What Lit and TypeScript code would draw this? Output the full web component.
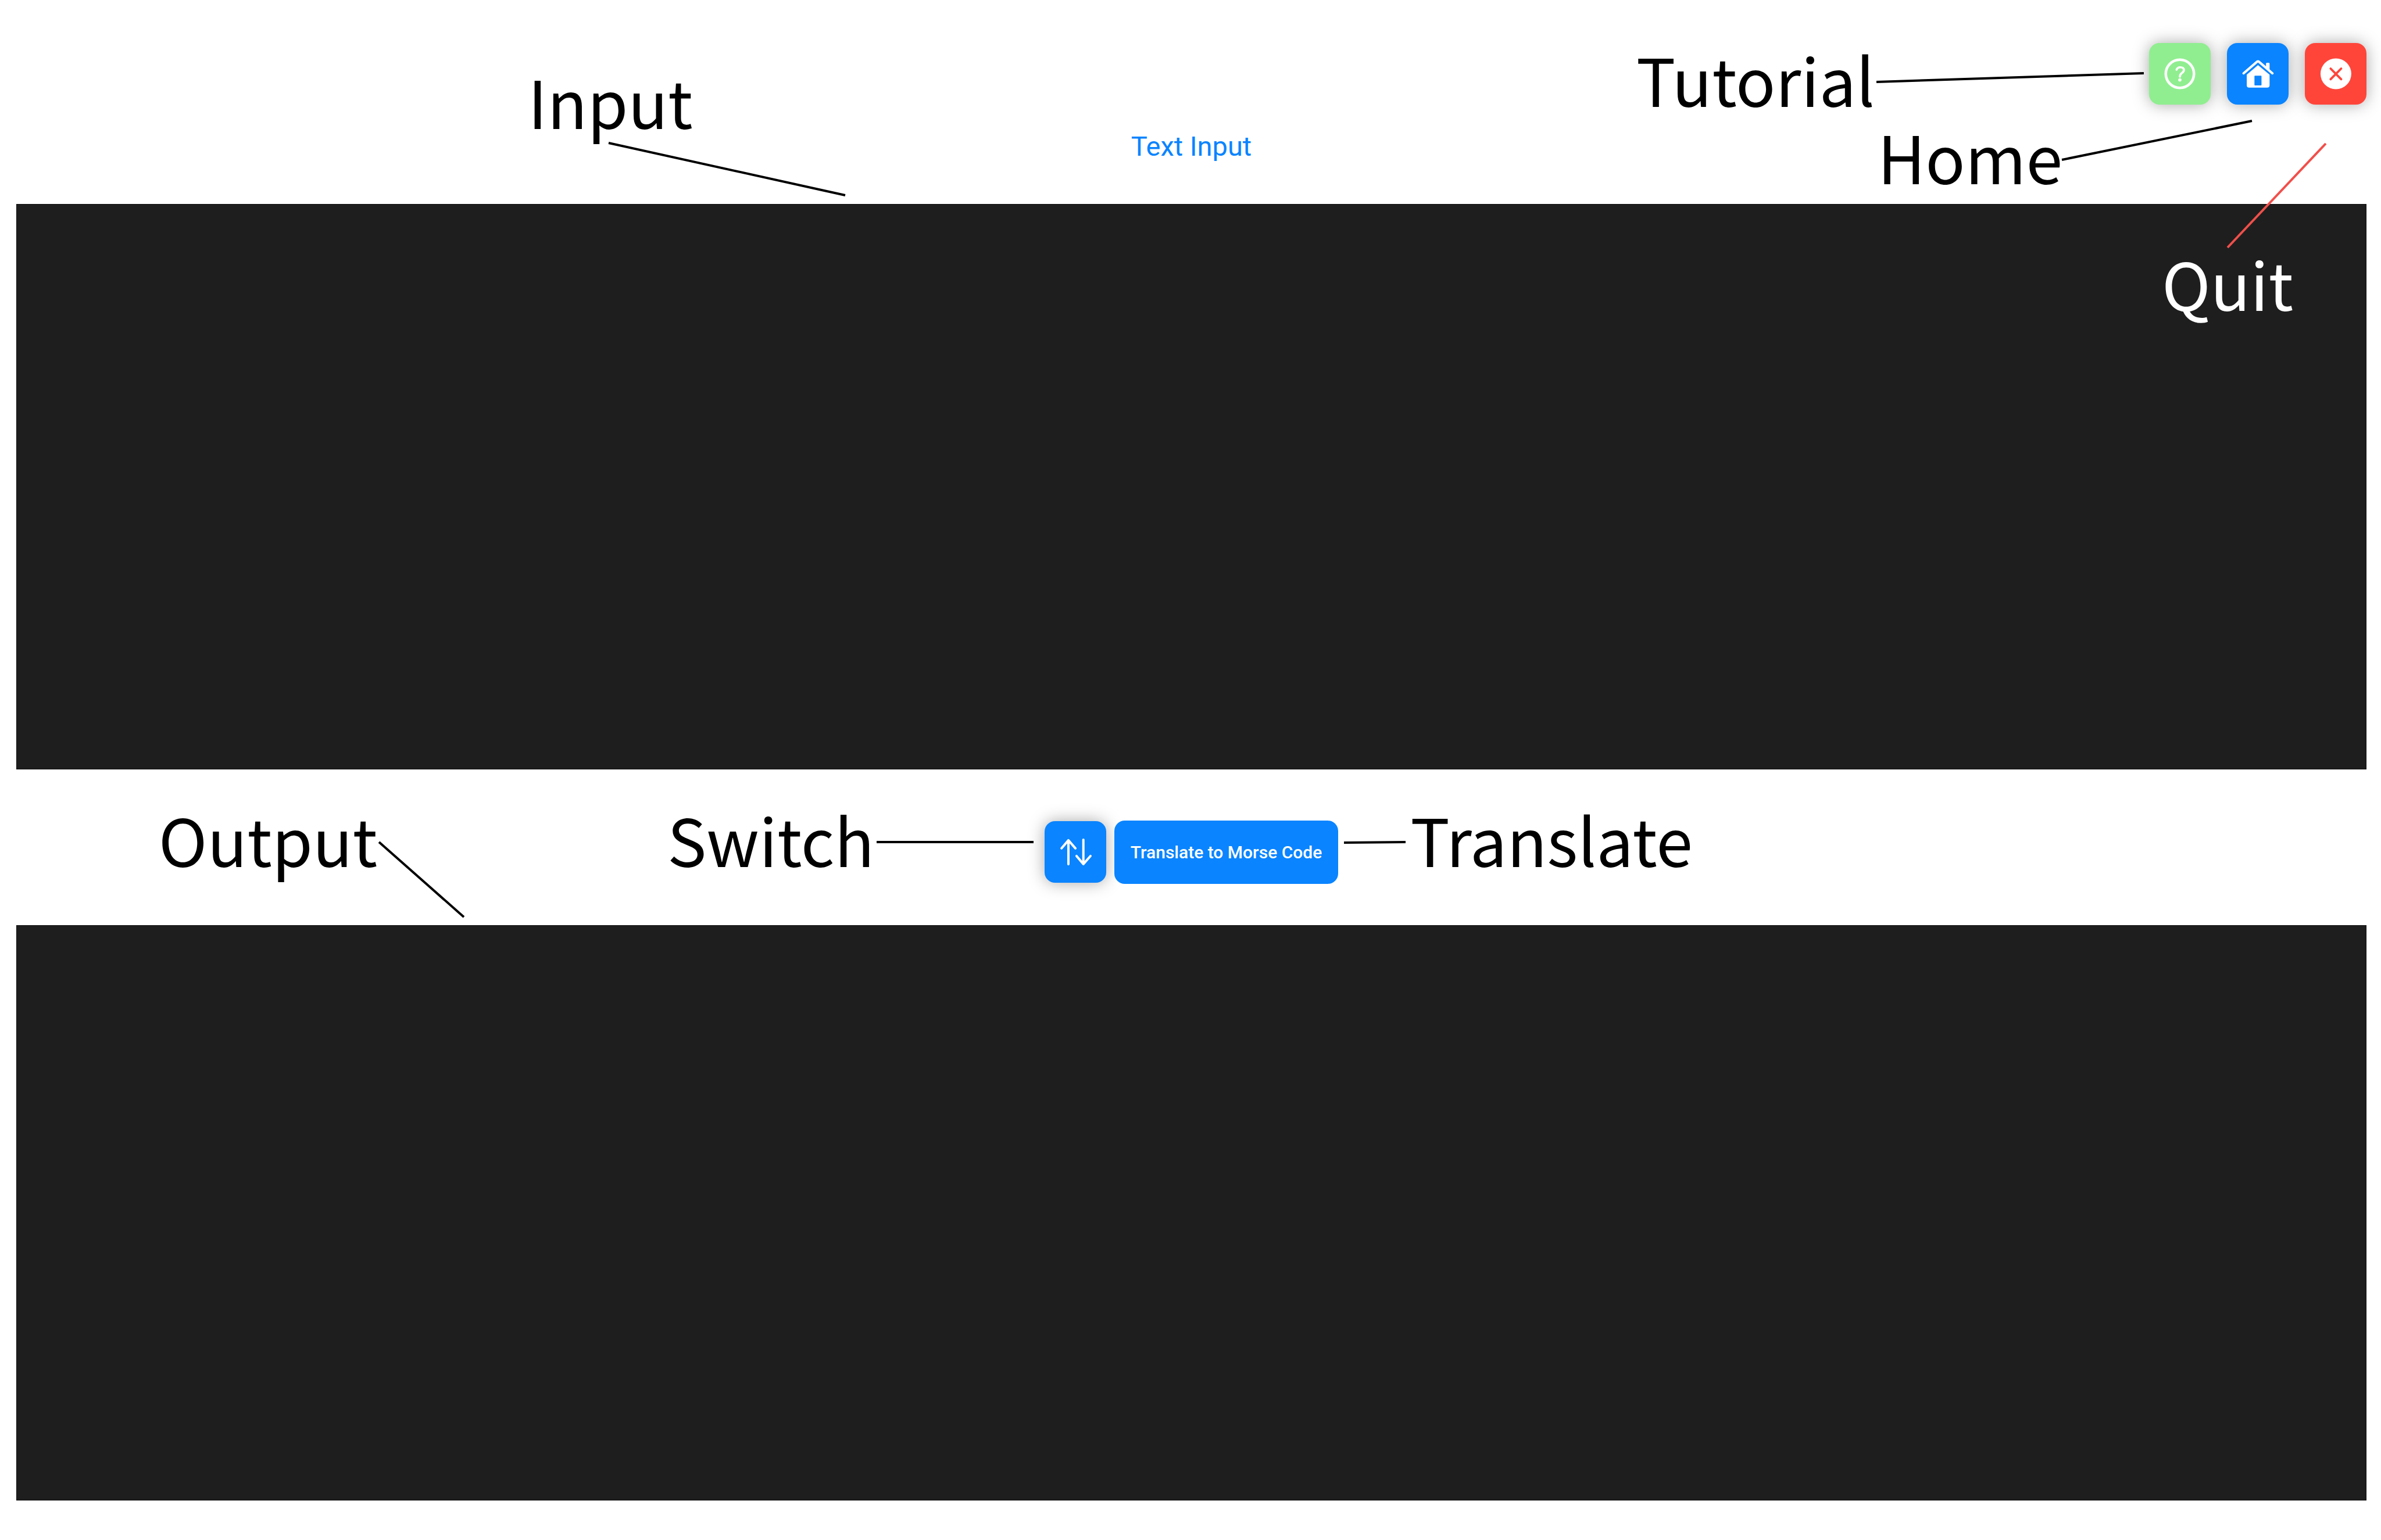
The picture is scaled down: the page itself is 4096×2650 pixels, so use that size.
import { LitElement, html, svg, css } from "lit";
import { customElement } from "lit/decorators.js";

interface Callout {
  text: string;
  x: number;
  baseline: number;
  line: [number, number, number, number];
  tone?: string;
}

// Callout text is centred on x; each leader line runs x1,y1 to x2,y2.
const CALLOUTS: Callout[] = [
  { text: "Input", x: 1050, baseline: 222, line: [1047, 246, 1454, 336] },
  { text: "Tutorial", x: 3020, baseline: 184, line: [3228, 141, 3688, 126] },
  { text: "Home", x: 3389, baseline: 317, line: [3547, 275, 3874, 208] },
  { text: "Quit", x: 3832, baseline: 535, line: [3832, 426, 4001, 247], tone: "quit" },
  { text: "Output", x: 461, baseline: 1492, line: [652, 1449, 798, 1578] },
  { text: "Switch", x: 1326, baseline: 1492, line: [1508, 1449, 1778, 1449] },
  { text: "Translate", x: 2669, baseline: 1492, line: [2312, 1450, 2418, 1449] },
];

const helpIcon = svg`
  <circle class="stroke" cx="66" cy="66" r="30.2" stroke-width="5.6" />
  <path class="stroke" stroke-width="4.6" d="M58.9 57.3C60 53.6 63 52 67 52C71.5 52 74.7 54.3 74.7 58C74.7 61.5 72.3 63 69.8 64.7C67.3 66.5 66.1 68 66.1 72" />
  <circle class="fill" cx="66" cy="79" r="3.5" />`;

const homeIcon = svg`
  <path class="stroke" stroke-width="5" d="M35.5 65L64.6 40Q66.5 38.4 68.4 40L97.5 65" />
  <path class="fill" d="M83.7 53V44.3Q83.7 42.3 85.7 42.3H89.3Q91.3 42.3 91.3 44.3V60Z" />
  <path class="fill" fill-rule="evenodd" d="M66.5 47.3L91.3 67.9V90.7Q91.3 95.7 86.3 95.7H47.4Q42.4 95.7 42.4 90.7V67.9ZM60.2 70Q58.9 70 58.9 71.3V89.7Q58.9 91 60.2 91H72.8Q74 91 74 89.7V71.3Q74 70 72.8 70Z" />`;

const closeIcon = svg`
  <circle class="fill" cx="66.5" cy="66" r="33" />
  <path class="cross" stroke-width="4.8" d="M55.2 54.8L77.8 77.6M77.8 54.8L55.2 77.6" />`;

const swapIcon = svg`
  <path class="stroke" stroke-width="5" d="M51 92.3V41M36.3 58.3L51 41L66.1 58.3" />
  <path class="stroke" stroke-width="5" d="M83.1 40V91.3M68.4 74.7L83.1 92L98.3 74.7" />`;

@customElement("app-root")
export class AppRoot extends LitElement {
  static styles = css`
    :host {
      display: block;
      font-family: Roboto, "Liberation Sans", sans-serif;
      color: #0a84ff;
      background: #fff;
    }
    .page {
      position: relative;
      box-sizing: border-box;
      min-height: 100vh;
      padding: 74px 25px 68px 28px;
      display: flex;
      flex-direction: column;
    }
    .toolbar {
      display: flex;
      justify-content: flex-end;
      gap: 28px;
    }
    .title {
      margin: 0;
      padding: 42px 0 69px;
      font-size: 47px;
      line-height: 60px;
      font-weight: 400;
      text-align: center;
    }
    .panel {
      display: block;
      box-sizing: border-box;
      width: 100%;
      min-height: 200px;
      margin: 0;
      padding: 20px;
      border: 1px solid #0c0c0c;
      border-radius: 0;
      outline: 0;
      resize: none;
      background: #1e1e1e;
      color: #fff;
      font: inherit;
      font-size: 47px;
    }
    .source {
      flex: 54 1 0;
    }
    .result {
      flex: 55 1 0;
    }
    .actions {
      display: flex;
      justify-content: center;
      align-items: center;
      gap: 14px;
      padding: 88px 0 71px;
    }
    button {
      margin: 0;
      padding: 0;
      border: 0;
      border-radius: 18px;
      background: #0a84ff;
      color: #fff;
      font-family: inherit;
      cursor: pointer;
    }
    .tile {
      width: 106px;
      height: 106px;
      box-shadow: 0 0 28px rgba(0, 0, 0, 0.34);
    }
    .tile svg {
      display: block;
      width: 100%;
      height: 100%;
    }
    .help {
      background: #90ee90;
    }
    .close {
      background: #ff453a;
    }
    .translate {
      height: 109px;
      padding: 0 28px;
      font-size: 30px;
      font-weight: 500;
      white-space: nowrap;
    }
    .stroke {
      fill: none;
      stroke: #fff;
      stroke-linecap: round;
      stroke-linejoin: round;
    }
    .fill {
      fill: #fff;
    }
    .cross {
      fill: none;
      stroke: #ff453a;
      stroke-linecap: round;
    }
    .callouts {
      position: absolute;
      top: 0;
      left: 0;
      width: 100%;
      pointer-events: none;
    }
    .callouts text {
      font-family: "Noto Sans CJK SC", "Noto Sans", sans-serif;
      font-size: 113px;
      text-anchor: middle;
      fill: #000;
    }
    .callouts line {
      stroke: #000;
      stroke-width: 4px;
    }
    .callouts .quit text {
      fill: #fff;
    }
    .callouts .quit line {
      stroke: #f14f4a;
    }
  `;

  render() {
    return html`
      <main class="page">
        <nav class="toolbar">
          <button class="tile help" aria-label="Tutorial"><svg viewBox="0 0 132 132">${helpIcon}</svg></button>
          <button class="tile" aria-label="Home"><svg viewBox="0 0 132 132">${homeIcon}</svg></button>
          <button class="tile close" aria-label="Quit"><svg viewBox="0 0 132 132">${closeIcon}</svg></button>
        </nav>
        <h1 class="title"><label for="source">Text Input</label></h1>
        <textarea class="panel source" id="source"></textarea>
        <div class="actions">
          <button class="tile" aria-label="Switch"><svg viewBox="0 0 132 132">${swapIcon}</svg></button>
          <button class="translate">Translate to Morse Code</button>
        </div>
        <textarea class="panel result" aria-label="Output" readonly></textarea>
        <svg class="callouts" viewBox="0 0 4096 2650">
          ${CALLOUTS.map(
            (c) => svg`<g class=${c.tone ?? ""}>
              <line x1=${c.line[0]} y1=${c.line[1]} x2=${c.line[2]} y2=${c.line[3]} />
              <text x=${c.x} y=${c.baseline}>${c.text}</text>
            </g>`,
          )}
        </svg>
      </main>
    `;
  }
}
